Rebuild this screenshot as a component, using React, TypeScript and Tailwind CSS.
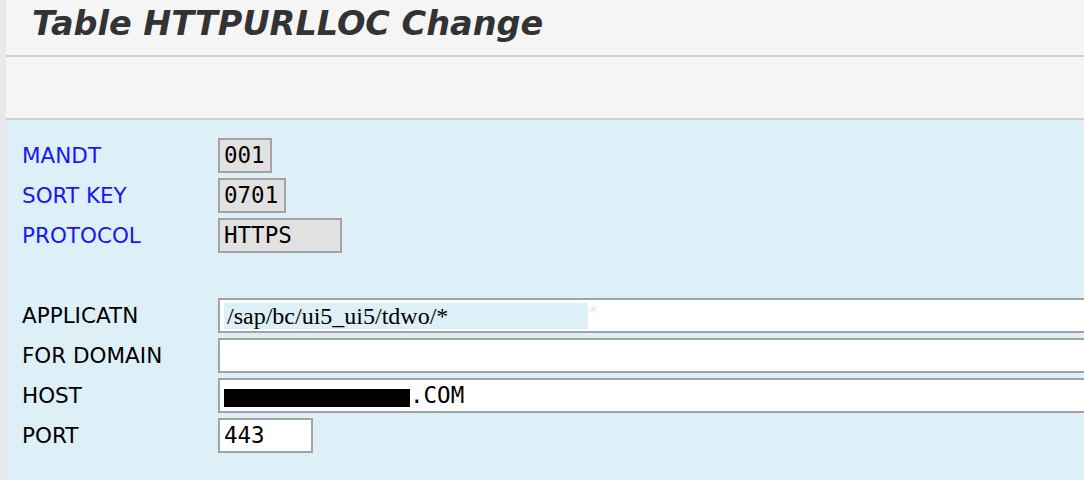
import React from "react";

const label = "font-['DejaVu_Sans',sans-serif] text-[21.5px] leading-none";
const mono = "font-['DejaVu_Sans_Mono',monospace] text-[22.5px] leading-none";

function Field({
  width,
  grey,
  children,
}: {
  width?: string;
  grey?: boolean;
  children?: React.ReactNode;
}) {
  return (
    <div
      className={`h-[35px] border-2 border-[#a3a3a3] flex items-center px-[4px] ${
        grey ? "bg-[#e1e1e1]" : "bg-white"
      } ${width ?? "flex-1 border-r-0"}`}
    >
      {children}
    </div>
  );
}

function Row({
  name,
  blue,
  children,
}: {
  name: string;
  blue?: boolean;
  children: React.ReactNode;
}) {
  return (
    <div className="flex items-center h-[35px]">
      <div className={`w-[196px] ${label} ${blue ? "text-[#1717f6]" : "text-black"}`}>
        {name}
      </div>
      {children}
    </div>
  );
}

export default function App() {
  return (
    <div className="flex w-[1084px] h-[480px] overflow-hidden bg-[#e8e8e8]">
      <div className="w-[6px] shrink-0 bg-[#e9e9e9]" />
      <div className="flex-1 flex flex-col">
        {/* Title bar */}
        <div className="h-[57px] shrink-0 bg-[#f5f5f5] border-b-2 border-[#d1d1d1] pl-[26px] pt-[5px]">
          <h1 className="font-['DejaVu_Sans',sans-serif] font-bold italic text-[33.5px] leading-[38px] text-[#333333]">
            Table HTTPURLLOC Change
          </h1>
        </div>

        {/* Toolbar (empty) */}
        <div className="h-[63px] shrink-0 bg-[#f5f5f5] border-b-2 border-[#d1d1d1]" />

        {/* Form area */}
        <div className="flex-1 bg-[#ddeff7] pl-[16px] pt-[18px]">
          <div className="flex flex-col gap-[5px]">
            <Row name="MANDT" blue>
              <Field width="w-[54px]" grey>
                <span className={mono}>001</span>
              </Field>
            </Row>
            <Row name="SORT KEY" blue>
              <Field width="w-[68px]" grey>
                <span className={mono}>0701</span>
              </Field>
            </Row>
            <Row name="PROTOCOL" blue>
              <Field width="w-[124px]" grey>
                <span className={mono}>HTTPS</span>
              </Field>
            </Row>
          </div>

          <div className="flex flex-col gap-[5px] mt-[45px]">
            <Row name="APPLICATN">
              <Field>
                <div className="relative flex items-center h-full">
                  <div className="h-[26px] w-[364px] bg-[#ddeff7] flex items-center pl-[3px]">
                    <span className="font-['Liberation_Serif',serif] text-[24px] leading-none text-black">
                      /sap/bc/ui5_ui5/tdwo/*
                    </span>
                  </div>
                  <span className="font-['DejaVu_Sans',sans-serif] text-[18px] leading-none text-[#d9eaf3] -mt-[8px] ml-[1px]">
                    *
                  </span>
                </div>
              </Field>
            </Row>
            <Row name="FOR DOMAIN">
              <Field />
            </Row>
            <Row name="HOST">
              <Field>
                <div className="flex items-center">
                  <div className="h-[18px] w-[186px] bg-black mt-[4px]" />
                  <span className={mono}>.COM</span>
                </div>
              </Field>
            </Row>
            <Row name="PORT">
              <Field width="w-[95px]">
                <span className={mono}>443</span>
              </Field>
            </Row>
          </div>
        </div>
      </div>
    </div>
  );
}
